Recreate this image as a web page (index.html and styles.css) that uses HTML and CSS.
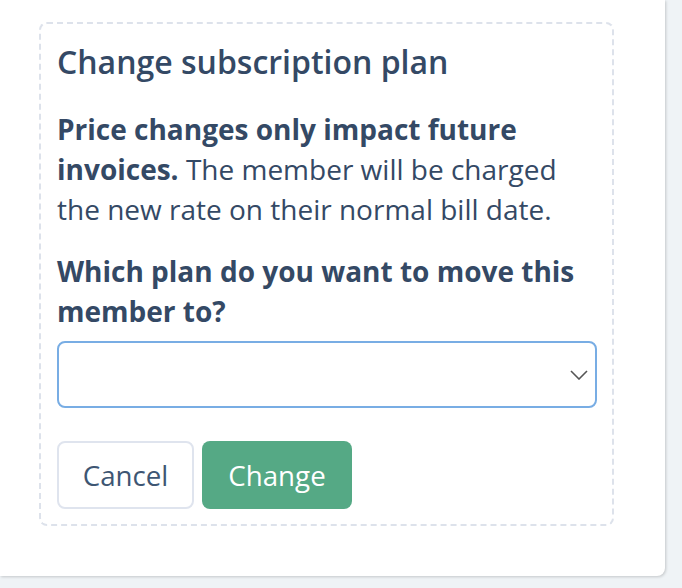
FILE: index.html
```html
<!DOCTYPE html>
<html lang="en">
<head>
<meta charset="utf-8">
<title>Change subscription plan</title>
<link rel="stylesheet" href="styles.css">
</head>
<body>
<div class="card">
  <div class="panel">
    <h2 class="title">Change subscription plan</h2>
    <p class="note"><strong>Price changes only impact future invoices.</strong> The member will be charged the new rate on their normal bill date.</p>
    <label class="question" for="plan">Which plan do you want to move this member to?</label>
    <div class="select">
      <select id="plan" class="select-input"><option></option></select>
      <svg class="chev" width="18" height="10" viewBox="0 0 18 10"><path d="M1 1 L9 9 L17 1" fill="none" stroke="#555" stroke-width="1.6"/></svg>
    </div>
    <div class="actions">
      <button class="btn btn-cancel">Cancel</button>
      <button class="btn btn-change">Change</button>
    </div>
  </div>
</div>
</body>
</html>
```
FILE: styles.css
```css
html, body {
  margin: 0;
  padding: 0;
}
body {
  background: #eff3f6;
  font-family: "Open Sans", "Noto Sans", sans-serif;
  color: #344965;
  width: 682px;
  height: 588px;
  overflow: hidden;
}
.card {
  width: 665px;
  height: 576px;
  background: #fff;
  border-bottom-right-radius: 8px;
  box-shadow: 1px 1px 3px rgba(0, 0, 0, 0.18);
  padding: 22px 0 0 39px;
  box-sizing: border-box;
}
.panel {
  width: 575px;
  height: 504px;
  box-sizing: border-box;
  border: 2px dashed #dde2eb;
  border-radius: 8px;
  padding: 17px 16px 0 16px;
}
.title {
  margin: 0;
  font-size: 32px;
  font-weight: 600;
  line-height: 42px;
}
.note {
  margin: 26px 0 0 0;
  font-size: 28px;
  line-height: 40px;
  width: 530px;
}
.note strong {
  font-weight: 700;
}
.question {
  display: block;
  margin-top: 22px;
  font-size: 28px;
  font-weight: 700;
  line-height: 40px;
  width: 539px;
}
.select {
  position: relative;
  margin-top: 10px;
  width: 540px;
  height: 67px;
}
.select-input {
  display: block;
  width: 100%;
  height: 67px;
  box-sizing: border-box;
  border: 2px solid #78ade4;
  border-radius: 8px;
  background: #fff;
  appearance: none;
  -webkit-appearance: none;
  outline: none;
  font: inherit;
}
.chev {
  position: absolute;
  right: 9px;
  top: 29px;
}
.actions {
  display: flex;
  gap: 8px;
  margin-top: 33px;
}
.btn {
  height: 68px;
  border-radius: 8px;
  font-family: "Open Sans", "Noto Sans", sans-serif;
  font-size: 27.7px;
  font-weight: 400;
  padding: 0;
  box-sizing: border-box;
}
.btn-cancel {
  width: 137px;
  background: #fff;
  border: 2px solid #dfe4ee;
  color: #3e5673;
}
.btn-change {
  width: 150px;
  background: #55a985;
  border: none;
  color: #fff;
}
```
